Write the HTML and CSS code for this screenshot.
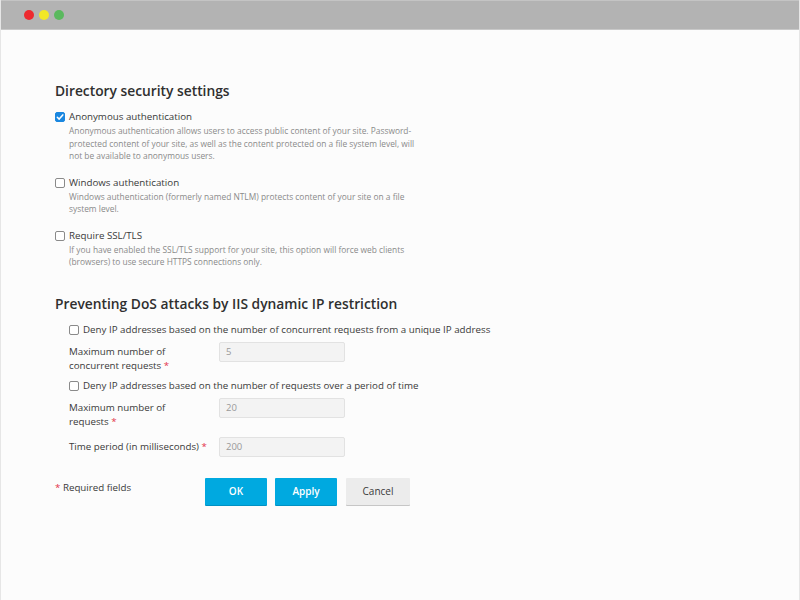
FILE: index.html
```html
<!DOCTYPE html>
<html lang="en">
<head>
<meta charset="utf-8">
<title>Directory security settings</title>
<link rel="stylesheet" href="styles.css">
</head>
<body>
<div class="window">
  <div class="titlebar">
    <span class="dot dot-red"></span>
    <span class="dot dot-yellow"></span>
    <span class="dot dot-green"></span>
  </div>
  <div class="content">
    <h2 class="section-title">Directory security settings</h2>

    <div class="option">
      <label class="check-row">
        <span class="box box-checked"><svg viewBox="0 0 10 10" width="10" height="10"><path d="M2.3 5.2 L4.2 7.1 L7.8 2.9" fill="none" stroke="#fff" stroke-width="1.5" stroke-linecap="round" stroke-linejoin="round"/></svg></span>
        <span class="check-text">Anonymous authentication</span>
      </label>
      <p class="desc">Anonymous authentication allows users to access public content of your site. Password-protected content of your site, as well as the content protected on a file system level, will not be available to anonymous users.</p>
    </div>

    <div class="option">
      <label class="check-row">
        <span class="box"></span>
        <span class="check-text">Windows authentication</span>
      </label>
      <p class="desc">Windows authentication (formerly named NTLM) protects content of your site on a file system level.</p>
    </div>

    <div class="option">
      <label class="check-row">
        <span class="box"></span>
        <span class="check-text">Require SSL/TLS</span>
      </label>
      <p class="desc">If you have enabled the SSL/TLS support for your site, this option will force web clients (browsers) to use secure HTTPS connections only.</p>
    </div>

    <h2 class="section-title section-title-2">Preventing DoS attacks by IIS dynamic IP restriction</h2>

    <div class="dos">
      <label class="check-row">
        <span class="box"></span>
        <span class="check-text">Deny IP addresses based on the number of concurrent requests from a unique IP address</span>
      </label>
      <div class="field-row field-row-1">
        <span class="field-label required">Maximum number of concurrent requests</span>
        <span class="input">5</span>
      </div>
      <label class="check-row check-row-2">
        <span class="box"></span>
        <span class="check-text">Deny IP addresses based on the number of requests over a period of time</span>
      </label>
      <div class="field-row field-row-2">
        <span class="field-label required">Maximum number of requests</span>
        <span class="input">20</span>
      </div>
      <div class="field-row field-row-3">
        <span class="field-label required">Time period (in milliseconds)</span>
        <span class="input">200</span>
      </div>
    </div>

    <div class="actions">
      <span class="required-note">Required fields</span>
      <div class="buttons">
        <button class="btn btn-primary">OK</button>
        <button class="btn btn-primary">Apply</button>
        <button class="btn btn-cancel">Cancel</button>
      </div>
    </div>
  </div>
</div>
</body>
</html>
```

FILE: styles.css
```css
html, body {
  margin: 0;
  padding: 0;
  background: #fcfcfc;
}
body {
  font-family: "Open Sans", "Noto Sans", sans-serif;
  color: #3a3a3a;
}
.window {
  width: 800px;
  height: 600px;
  box-sizing: border-box;
  border-left: 1px solid #e6e6e6;
  border-right: 1px solid #e6e6e6;
  background: #fcfcfc;
  display: flex;
  flex-direction: column;
}
.titlebar {
  height: 30px;
  background: #b3b3b3;
  border-top: 1px solid #c4c4c4;
  border-bottom: 1px solid #c8c8c8;
  box-sizing: border-box;
  display: flex;
  align-items: center;
  gap: 5px;
  padding-left: 23px;
  flex-shrink: 0;
}
.dot {
  width: 10px;
  height: 10px;
  border-radius: 50%;
}
.dot-red { background: #ee2a2f; }
.dot-yellow { background: #f2e827; }
.dot-green { background: #5ab95e; }

.content {
  padding: 51px 0 0 54px;
}
.section-title {
  margin: 0;
  font-size: 13.8px;
  line-height: 20px;
  font-weight: 600;
  color: #2f2f2f;
}
.section-title-2 {
  margin-top: 25px;
}
.option {
  margin-top: 9px;
}
.option + .option {
  margin-top: 13px;
}
.check-row {
  display: flex;
  align-items: center;
  gap: 4px;
  height: 14px;
}
.box {
  width: 10px;
  height: 10px;
  box-sizing: border-box;
  border: 1px solid #8a8a8a;
  border-radius: 2px;
  background: #fff;
  display: flex;
  flex-shrink: 0;
}
.box-checked {
  background: #1a87e0;
  border-color: #1a87e0;
}
.box-checked svg {
  margin: -1px;
}
.check-text {
  font-size: 9.75px;
  line-height: 14px;
  color: #3a3a3a;
}
.desc {
  width: 350px;
  margin: 1px 0 0 14px;
  font-size: 8.4px;
  line-height: 12.5px;
  color: #8a8a8a;
}
.dos {
  margin-top: 9px;
  padding-left: 14px;
}
.check-row-2 {
  margin-top: 6px;
}
.field-row {
  display: grid;
  grid-template-columns: 150px 126px;
}
.field-row-1 {
  margin-top: 5px;
}
.field-row-2 {
  margin-top: 5px;
}
.field-row-3 {
  margin-top: 8px;
}
.field-label {
  font-size: 9.75px;
  line-height: 14px;
  padding-top: 3px;
  padding-right: 42px;
  color: #3a3a3a;
}
.field-row-3 .field-label {
  padding-right: 0;
}
.required::after {
  content: " *";
  color: #e3324a;
}
.input {
  height: 20px;
  box-sizing: border-box;
  background: #f3f3f3;
  border: 1px solid #e2e2e2;
  border-radius: 2px;
  font-size: 9.5px;
  line-height: 18px;
  padding-left: 6px;
  color: #999;
}
.actions {
  display: grid;
  grid-template-columns: 150px auto;
  margin-top: 21px;
}
.required-note {
  font-size: 9.75px;
  line-height: 14px;
  padding-top: 3px;
  color: #3a3a3a;
}
.required-note::before {
  content: "* ";
  color: #e3324a;
}
.buttons {
  display: flex;
  gap: 8px;
}
.btn {
  width: 62px;
  height: 27px;
  border: none;
  border-radius: 1px;
  font-family: "Open Sans", "Noto Sans", sans-serif;
  font-size: 10px;
  padding: 0;
  cursor: pointer;
}
.btn-primary {
  background: #00a9e0;
  color: #fff;
  font-weight: 600;
  box-shadow: 0 1px 0 #0091c3;
}
.btn-cancel {
  width: 64px;
  margin-left: 1px;
  background: #ececec;
  color: #3a3a3a;
  box-shadow: 0 1px 0 #c6c6c6;
}
```
